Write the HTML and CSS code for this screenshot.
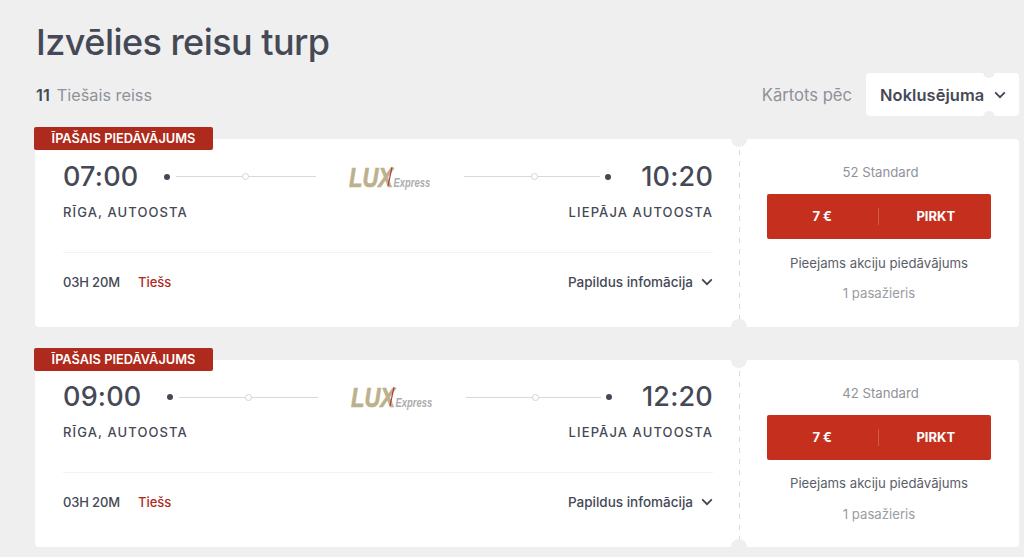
FILE: index.html
```html
<!DOCTYPE html>
<html lang="lv">
<head>
<meta charset="utf-8">
<title>Izvēlies reisu turp</title>
<link rel="stylesheet" href="styles.css">
</head>
<body>
<h1 class="title">Izvēlies reisu turp</h1>
<div class="toolbar">
  <div class="count"><b>11</b><span>Tiešais reiss</span></div>
  <div class="sort">
    <span class="sort-label">Kārtots pēc</span>
    <div class="select">Noklusējuma
      <svg class="chev" width="12" height="8" viewBox="0 0 12 8"><path d="M1.2 1.4 6 6.2l4.8-4.8" fill="none" stroke="#3f4350" stroke-width="1.7"/></svg>
      <i class="notch notch-top"></i><i class="notch notch-bottom"></i>
    </div>
  </div>
</div>

<article class="card">
  <div class="badge">ĪPAŠAIS PIEDĀVĀJUMS</div>
  <div class="main">
    <div class="route">
      <span class="time">07:00</span>
      <i class="dot dot-start"></i>
      <div class="track track-in"><i class="ring"></i></div>
      <svg class="logo" width="84" height="40" viewBox="0 0 84 40"><text class="lux" transform="translate(0 30) scale(.786 1)">LUX</text><line x1="43" y1="10" x2="39" y2="29" stroke="#b9352a" stroke-width="1.2"/><text class="express" transform="translate(44.5 30) scale(.725 1)">Express</text></svg>
      <div class="track track-out"><i class="ring"></i></div>
      <i class="dot dot-end"></i>
      <span class="time">10:20</span>
    </div>
    <div class="places"><span>RĪGA, AUTOOSTA</span><span>LIEPĀJA AUTOOSTA</span></div>
    <div class="meta">
      <div><span class="duration">03H 20M</span><span class="direct">Tiešs</span></div>
      <div class="more">Papildus infomācija
        <svg width="12" height="8" viewBox="0 0 12 8"><path d="M1.2 1.4 6 6.2l4.8-4.8" fill="none" stroke="#3f4350" stroke-width="1.7"/></svg>
      </div>
    </div>
  </div>
  <div class="side">
    <i class="notch notch-top"></i><i class="notch notch-bottom"></i>
    <div class="seats">52 Standard</div>
    <div class="buy"><span>7 €</span><span>PIRKT</span></div>
    <div class="offer">Pieejams akciju piedāvājums</div>
    <div class="pax">1 pasažieris</div>
  </div>
</article>

<article class="card">
  <div class="badge">ĪPAŠAIS PIEDĀVĀJUMS</div>
  <div class="main">
    <div class="route">
      <span class="time">09:00</span>
      <i class="dot dot-start"></i>
      <div class="track track-in"><i class="ring"></i></div>
      <svg class="logo" width="84" height="40" viewBox="0 0 84 40"><text class="lux" transform="translate(0 30) scale(.786 1)">LUX</text><line x1="43" y1="10" x2="39" y2="29" stroke="#b9352a" stroke-width="1.2"/><text class="express" transform="translate(44.5 30) scale(.725 1)">Express</text></svg>
      <div class="track track-out"><i class="ring"></i></div>
      <i class="dot dot-end"></i>
      <span class="time">12:20</span>
    </div>
    <div class="places"><span>RĪGA, AUTOOSTA</span><span>LIEPĀJA AUTOOSTA</span></div>
    <div class="meta">
      <div><span class="duration">03H 20M</span><span class="direct">Tiešs</span></div>
      <div class="more">Papildus infomācija
        <svg width="12" height="8" viewBox="0 0 12 8"><path d="M1.2 1.4 6 6.2l4.8-4.8" fill="none" stroke="#3f4350" stroke-width="1.7"/></svg>
      </div>
    </div>
  </div>
  <div class="side">
    <i class="notch notch-top"></i><i class="notch notch-bottom"></i>
    <div class="seats">42 Standard</div>
    <div class="buy"><span>7 €</span><span>PIRKT</span></div>
    <div class="offer">Pieejams akciju piedāvājums</div>
    <div class="pax">1 pasažieris</div>
  </div>
</article>
</body>
</html>
```
FILE: styles.css
```css
* { box-sizing: border-box; }
html, body { height: 100%; overflow: hidden; }
body {
  margin: 0;
  padding: 0 5px 0 35px;
  background: #efefef;
  color: #454955;
  font-family: Inter, "Noto Sans", sans-serif;
}
.title {
  margin: 0;
  padding: 20px 0 0 1px;
  height: 73px;
  font-size: 36px;
  line-height: 45px;
  font-weight: 500;
  letter-spacing: -0.55px;
  color: #454955;
}
.toolbar {
  display: flex;
  justify-content: space-between;
  align-items: center;
  height: 43px;
  margin-bottom: 23px;
}
.count { display: flex; gap: 7px; padding-left: 1px; font-size: 16.3px; color: #8f929a; }
.count b { font-weight: 600; color: #454955; }
.sort { display: flex; align-items: center; gap: 14px; }
.sort-label { font-size: 16.6px; color: #8f929a; }
.select {
  position: relative;
  display: flex;
  align-items: center;
  justify-content: space-between;
  width: 153px;
  height: 43px;
  padding: 0 13px 0 14px;
  background: #fff;
  border-radius: 4px;
  font-size: 16.4px;
  font-weight: 600;
  letter-spacing: 0.1px;
  color: #454955;
}
.notch {
  position: absolute;
  width: 16px;
  height: 16px;
  border-radius: 50%;
  background: #efefef;
}
.select .notch { left: 117px; width: 12px; height: 12px; }
.select .notch-top { top: -7px; }
.select .notch-bottom { bottom: -7px; }
.card {
  position: relative;
  display: flex;
  width: 984px;
  height: 187.6px;
  margin-bottom: 33px;
  background: #fff;
  border-radius: 4px;
}
.badge {
  position: absolute;
  left: -1px;
  top: -12px;
  width: 179px;
  height: 23px;
  background: #ae2a1c;
  border-radius: 2px;
  color: #fff;
  font-size: 12.8px;
  font-weight: 600;
  line-height: 23px;
  text-align: center;
  white-space: nowrap;
}
.main { width: 705px; padding: 22.6px 27px 0 28px; }
.route { display: flex; align-items: center; height: 30px; }
.time { font-size: 27px; line-height: 30px; font-weight: 500; letter-spacing: 0.2px; color: #454955; }
.dot { flex: none; width: 6px; height: 6px; border-radius: 50%; background: #454955; }
.dot-start { margin-left: 26px; }
.dot-end { margin-right: 30px; }
.track { position: relative; height: 1px; background: #d9d9d9; }
.track-in { flex: 1 0 4px; margin-left: 6px; }
.track-out { flex: 1 0 0; margin-right: 5px; }
.track-out .ring { left: 52%; }
.ring {
  position: absolute;
  left: 50%;
  top: -3px;
  width: 7px;
  height: 7px;
  margin-left: -4px;
  border: 1px solid #d5d5d5;
  border-radius: 50%;
  background: #fff;
}
.logo { flex: none; margin: 0 31px 0 33px; }
.lux {
  font-family: "Liberation Sans", sans-serif;
  font-size: 28px;
  font-weight: 700;
  font-style: italic;
  fill: #bcb18c;
  stroke: #bcb18c;
  stroke-width: 0.7px;
}
.express {
  font-family: "Liberation Sans", sans-serif;
  font-size: 13px;
  font-weight: 700;
  font-style: italic;
  fill: #adadad;
}
.places {
  display: flex;
  justify-content: space-between;
  margin-top: 11px;
  height: 18px;
  font-size: 13px;
  line-height: 18px;
  font-weight: 500;
  letter-spacing: 1.1px;
  color: #454955;
}
.meta {
  display: flex;
  justify-content: space-between;
  align-items: center;
  margin-top: 31px;
  height: 59px;
  border-top: 1px solid #f2f2f2;
  font-size: 13px;
}
.duration { font-weight: 500; letter-spacing: -0.15px; color: #454955; }
.direct { margin-left: 18px; font-weight: 500; color: #ae2a1c; }
.more { display: flex; align-items: center; gap: 8px; font-size: 13.5px; font-weight: 500; color: #454955; }
.side {
  position: relative;
  flex: 1;
  background: repeating-linear-gradient(to bottom, #d9d9d9 0 5px, transparent 5px 11px) left top / 1px 100% no-repeat;
  margin-left: -1px;
  padding: 0 28px;
  text-align: center;
  font-size: 13.2px;
}
.side .notch { left: -8px; }
.side .notch-top { top: -8px; }
.side .notch-bottom { bottom: -8px; }
.seats { margin-top: 24px; padding-left: 3px; height: 18px; line-height: 18px; color: #8f929a; }
.buy {
  display: flex;
  align-items: center;
  margin-top: 13px;
  height: 45px;
  background: #c5301e;
  border-radius: 2px;
  color: #fff;
  font-size: 13px;
  font-weight: 700;
}
.buy span { flex: 1; text-align: center; line-height: 17px; }
.buy span + span { border-left: 1px solid #d65a4a; padding-left: 2px; }
.offer { margin-top: 14.7px; height: 18px; line-height: 18px; color: #5b5e68; }
.pax { margin-top: 12.3px; height: 18px; line-height: 18px; color: #9a9ca3; }
```
